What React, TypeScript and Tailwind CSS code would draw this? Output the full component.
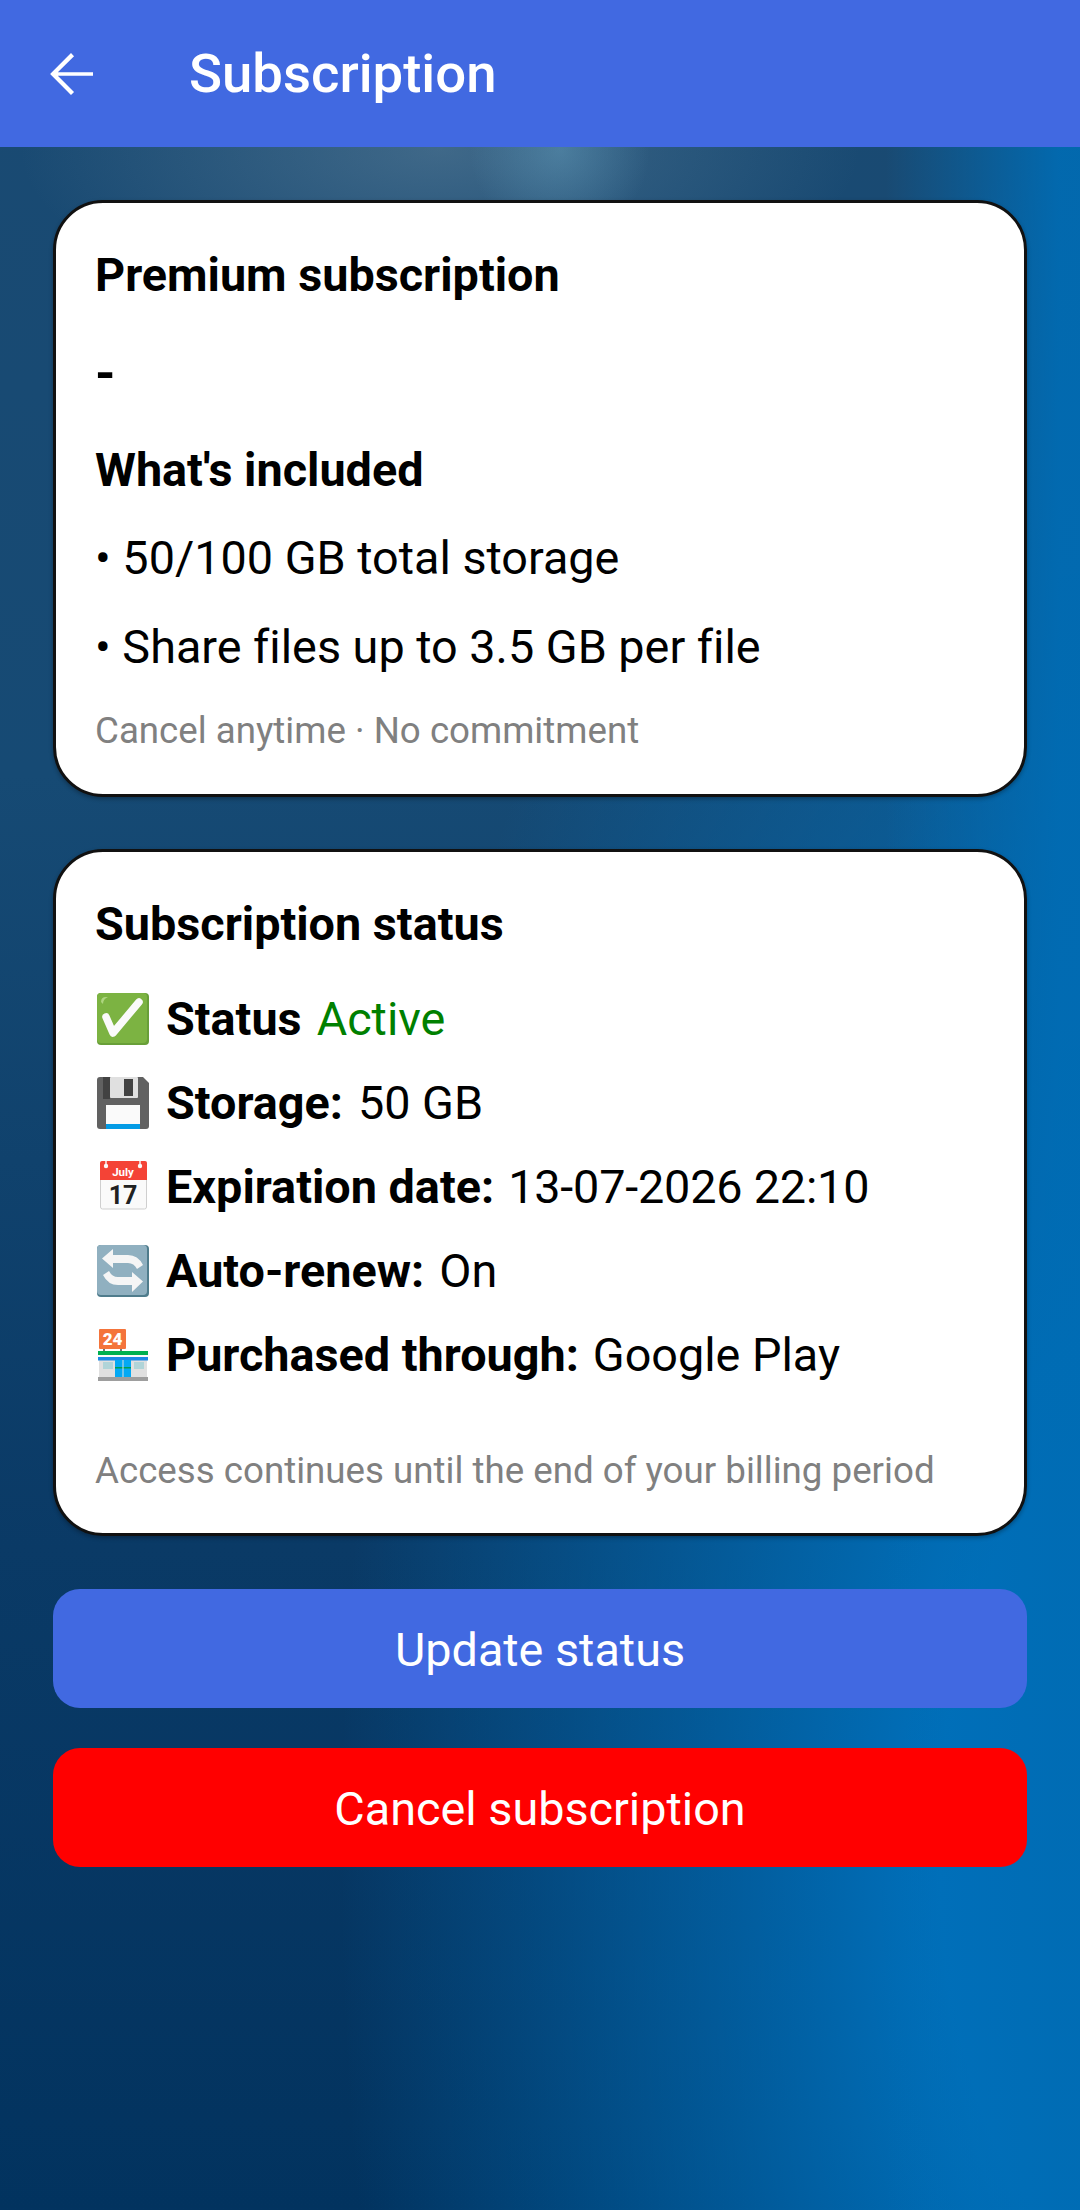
import type { ReactNode } from "react";

const CheckEmoji = () => (
  <svg viewBox="0 0 52 52" className="ml-[2px] h-[52px] w-[52px] shrink-0">
    <rect width="52" height="52" rx="4" fill="#689f38" />
    <rect width="50" height="50" rx="4" fill="#7cb342" />
    <path d="M4 9 Q4 4 9 4 L11 4 Q6 6 6 11 Z" fill="#aed581" />
    <path d="M9 24 L16 40 L42 9" fill="none" stroke="#fafafa" strokeWidth="7.5" strokeLinecap="round" strokeLinejoin="round" />
  </svg>
);

const FloppyEmoji = () => (
  <svg viewBox="0 0 52 52" className="ml-[2px] h-[52px] w-[52px] shrink-0">
    <path d="M3 0 H46 L52 6 V49 Q52 52 49 52 H3 Q0 52 0 49 V3 Q0 0 3 0 Z" fill="#616161" />
    <rect x="6" width="7" height="22" fill="#424242" />
    <rect x="13" width="28" height="21" rx="1" fill="#e0e0e0" />
    <rect x="27" y="2" width="9" height="17" fill="#424242" />
    <rect x="9" y="28" width="34" height="24" fill="#fafafa" />
    <rect x="9" y="47" width="34" height="5" fill="#039be5" />
  </svg>
);

const CalendarEmoji = () => (
  <svg viewBox="0 0 52 52" className="ml-[2px] h-[52px] w-[52px] shrink-0">
    <rect x="3.5" y="1" width="46" height="47" rx="2" fill="#fafafa" stroke="#cfcfcf" strokeWidth="1" />
    <path d="M3 2 Q3 0 5 0 H48 Q50 0 50 2 V19 H3 Z" fill="#f44336" />
    <circle cx="9" cy="5" r="2.2" fill="#fafafa" />
    <circle cx="43" cy="5" r="2.2" fill="#fafafa" />
    <rect x="8.3" y="0" width="1.4" height="4" fill="#fafafa" />
    <rect x="42.3" y="0" width="1.4" height="4" fill="#fafafa" />
    <text x="26" y="14.5" textAnchor="middle" fontSize="11.5" fontWeight="700" fill="#fff" fontFamily="Roboto, sans-serif">July</text>
    <text x="26" y="43" textAnchor="middle" fontSize="25" fontWeight="700" fill="#212121" fontFamily="Roboto, sans-serif">17</text>
  </svg>
);

const RepeatEmoji = () => (
  <svg viewBox="0 0 52 52" className="ml-[2px] h-[52px] w-[52px] shrink-0">
    <rect width="52" height="52" rx="4" fill="#4f7c8c" />
    <rect width="50" height="50" rx="4" fill="#90b0c0" />
    <path d="M16 4 L5 13.5 L16 23 V18 H31 Q37 18 40 24 L46 20 Q41 10 31 10 H16 Z" fill="#f5f5f5" />
    <path d="M35 47 L46 36.5 L35 27 V32 H21 Q15 32 12 26 L6 30 Q11 40 21 40 H35 Z" fill="#f5f5f5" />
  </svg>
);

const StoreEmoji = () => (
  <svg viewBox="0 0 52 52" className="ml-[2px] h-[52px] w-[52px] shrink-0">
    <rect x="6" y="19" width="2" height="4" fill="#757575" />
    <rect x="23" y="19" width="2" height="4" fill="#757575" />
    <rect x="2" width="27" height="20" rx="1" fill="#f4743b" />
    <text x="15.5" y="16" textAnchor="middle" fontSize="17" fontWeight="900" fill="#fff" fontFamily="Roboto, sans-serif">24</text>
    <rect x="2" y="31" width="48" height="17" fill="#e0e0e0" />
    <rect x="1" y="22" width="50" height="4" fill="#00b050" />
    <rect x="1" y="26" width="50" height="2" fill="#fafafa" />
    <rect x="1" y="28" width="50" height="3.5" fill="#1e88e5" />
    <rect x="6" y="33" width="10" height="7" fill="#b0d4d8" />
    <rect x="37" y="33" width="10" height="7" fill="#b0d4d8" />
    <rect x="18" y="31" width="16" height="17" fill="#03a9f4" />
    <rect x="18" y="38" width="16" height="1.5" fill="#00a050" />
    <rect x="25.5" y="31" width="1" height="17" fill="#e0e0e0" />
    <rect x="1" y="48" width="50" height="4" fill="#9e9e9e" />
  </svg>
);

function StatusRow({ icon, label, children }: { icon: ReactNode; label: string; children: ReactNode }) {
  return (
    <div className="flex h-[84px] items-center">
      {icon}
      <span className="ml-[17px] font-bold">{label}</span>
      {children}
    </div>
  );
}

export default function App() {
  return (
    <div className="flex h-[2210px] w-[1080px] flex-col overflow-hidden bg-[radial-gradient(ellipse_90px_90px_at_560px_150px,rgba(110,170,200,0.4),rgba(110,170,200,0)),radial-gradient(ellipse_420px_170px_at_440px_150px,rgba(120,150,170,0.4),rgba(120,150,170,0)),linear-gradient(90deg,rgba(0,108,180,0)_82%,rgba(0,108,180,0.9)_98%),radial-gradient(ellipse_800px_1700px_at_1140px_1850px,#0070bb_25%,rgba(0,112,187,0)),linear-gradient(180deg,#1a4a72_0%,#164a74_35%,#0a3a66_70%,#02335f_100%)] font-['Roboto',sans-serif] text-black [font-variant-ligatures:none]">
      <header className="flex h-[147px] shrink-0 items-center bg-[#4169e1]">
        <svg viewBox="0 0 24 24" className="ml-[38px] h-[66px] w-[66px] fill-white">
          <path d="M20 11.4H7.2l5.9-5.9L12 4.4l-7.6 7.6 7.6 7.6 1.1-1.1-5.9-5.9H20v-1.2z" />
        </svg>
        <h1 className="ml-[85px] text-[54.5px] font-medium text-white">Subscription</h1>
      </header>

      <main className="flex flex-col px-[53px] pt-[53px]">
        <section className="rounded-[50px] border-[3px] border-[#111] bg-white pb-[38px] pl-[39px] pr-[39px] pt-[42px] shadow-[0_2px_4px_rgba(0,0,0,0.3)]">
          <h2 className="text-[46.75px] leading-[60px] font-bold">Premium subscription</h2>
          <p className="mt-[39px] text-[52px] leading-[60px] font-bold">-</p>
          <h3 className="mt-[36px] text-[46.75px] leading-[60px] font-bold">What's included</h3>
          <p className="mt-[28px] text-[46.75px] leading-[60px]">• 50/100 GB total storage</p>
          <p className="mt-[29px] text-[46.75px] leading-[60px]">• Share files up to 3.5 GB per file</p>
          <p className="mt-[29px] text-[36.7px] leading-[50px] text-[#808080]">Cancel anytime · No commitment</p>
        </section>

        <section className="mt-[52px] rounded-[50px] border-[3px] border-[#111] bg-white pb-[37px] pl-[39px] pr-[39px] pt-[42px] shadow-[0_2px_4px_rgba(0,0,0,0.3)]">
          <h2 className="text-[46.75px] leading-[60px] font-bold">Subscription status</h2>
          <div className="mt-[23px] text-[46.75px]">
            <StatusRow icon={<CheckEmoji />} label="Status">
              <span className="ml-[15px] text-[#008000]">Active</span>
            </StatusRow>
            <StatusRow icon={<FloppyEmoji />} label="Storage:">
              <span className="ml-[15px]">50 GB</span>
            </StatusRow>
            <StatusRow icon={<CalendarEmoji />} label="Expiration date:">
              <span className="ml-[14px] tracking-[-0.18px]">13-07-2026 22:10</span>
            </StatusRow>
            <StatusRow icon={<RepeatEmoji />} label="Auto-renew:">
              <span className="ml-[15px]">On</span>
            </StatusRow>
            <StatusRow icon={<StoreEmoji />} label="Purchased through:">
              <span className="ml-[14px]">Google Play</span>
            </StatusRow>
          </div>
          <p className="mt-[49px] text-[36.7px] leading-[50px] text-[#808080]">Access continues until the end of your billing period</p>
        </section>

        <button className="mt-[53px] h-[119px] rounded-[27px] bg-[#4169e1] pt-[3px] text-[46.75px] text-white">Update status</button>
        <button className="mt-[40px] h-[119px] rounded-[27px] bg-[#ff0000] pt-[3px] text-[46.75px] text-white">Cancel subscription</button>
      </main>
    </div>
  );
}
